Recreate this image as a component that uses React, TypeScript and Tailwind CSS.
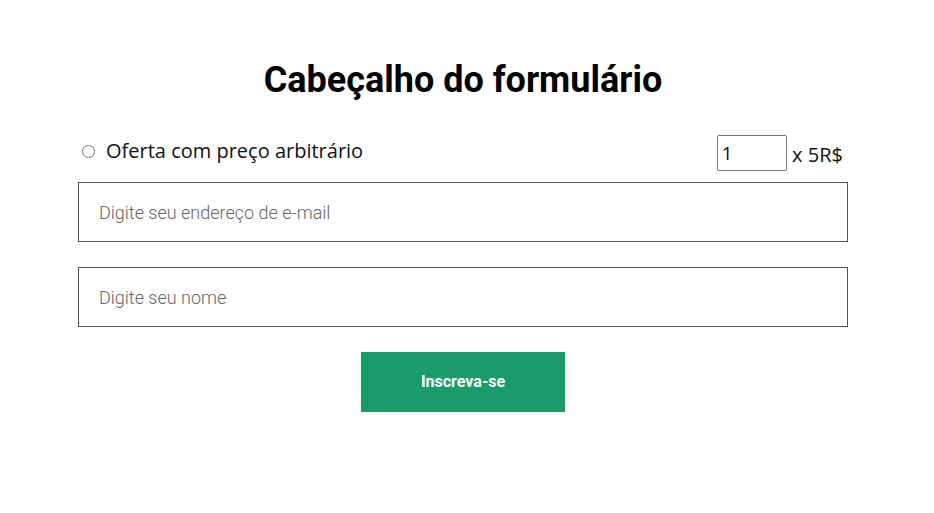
import React from "react";

export default function App() {
  return (
    <div className="min-h-[513px] w-full bg-white">
      <div className="ml-[78px] w-[770px] pt-[56px]">
        <h1 className="text-center font-[Roboto,sans-serif] text-[36px] font-bold leading-[48px] text-black">
          Cabeçalho do formulário
        </h1>
        <div className="mt-[31px] flex h-[36px] items-start justify-between">
          <label className="mt-[2px] flex items-center pl-[4px] font-['Open_Sans',sans-serif] text-[20px] leading-[28px] text-[#111]">
            <input type="radio" className="m-0 mr-[11px] h-[13px] w-[13px]" />
            Oferta com preço arbitrário
          </label>
          <div className="mr-[5px] flex items-center font-['Open_Sans',sans-serif] text-[20px] text-[#111]">
            <input
              type="text"
              defaultValue="1"
              className="h-[36px] w-[70px] rounded-[2px] border border-[#767676] px-[4px] font-['Open_Sans',sans-serif] text-[18px] text-black outline-none"
            />
            <span className="ml-[5px] mt-[3px]">x 5R$</span>
          </div>
        </div>
        <input
          type="email"
          placeholder="Digite seu endereço de e-mail"
          className="mt-[11px] block h-[60px] w-full border border-[#555] px-[20px] font-[Roboto,sans-serif] text-[18px] font-light text-[#333] outline-none placeholder:text-[#666]"
        />
        <input
          type="text"
          placeholder="Digite seu nome"
          className="mt-[25px] block h-[60px] w-full border border-[#555] px-[20px] font-[Roboto,sans-serif] text-[18px] font-light text-[#333] outline-none placeholder:text-[#666]"
        />
        <div className="mt-[25px] flex justify-center">
          <button className="h-[60px] w-[204px] bg-[#1a9c6a] font-[Roboto,sans-serif] text-[16px] font-bold text-white">
            Inscreva-se
          </button>
        </div>
      </div>
    </div>
  );
}
